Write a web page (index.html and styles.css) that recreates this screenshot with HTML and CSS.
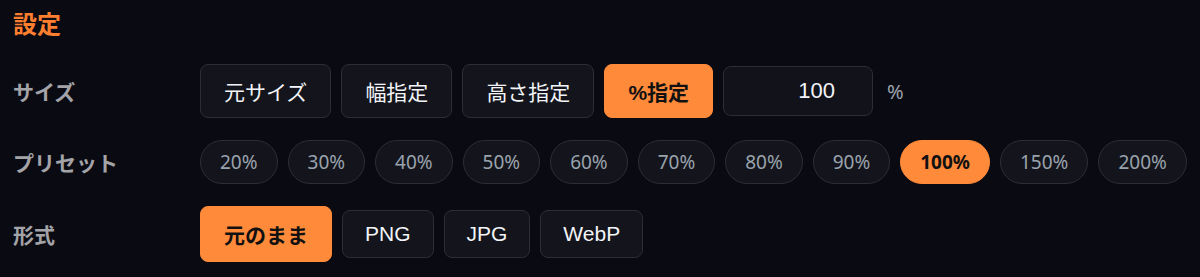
FILE: index.html
```html
<!DOCTYPE html>
<html lang="ja">
<head>
<meta charset="utf-8">
<link rel="stylesheet" href="styles.css">
</head>
<body>
<div class="panel">
  <h2 class="title">設定</h2>
  <div class="row">
    <div class="label">サイズ</div>
    <div class="controls">
      <button class="btn">元サイズ</button>
      <button class="btn">幅指定</button>
      <button class="btn">高さ指定</button>
      <button class="btn active">%指定</button>
      <div class="input">100</div>
      <span class="unit">%</span>
    </div>
  </div>
  <div class="row">
    <div class="label">プリセット</div>
    <div class="controls pills">
      <button class="pill">20%</button>
      <button class="pill">30%</button>
      <button class="pill">40%</button>
      <button class="pill">50%</button>
      <button class="pill">60%</button>
      <button class="pill">70%</button>
      <button class="pill">80%</button>
      <button class="pill">90%</button>
      <button class="pill active">100%</button>
      <button class="pill">150%</button>
      <button class="pill">200%</button>
    </div>
  </div>
  <div class="row">
    <div class="label">形式</div>
    <div class="controls">
      <button class="btn fmt active big">元のまま</button>
      <button class="btn fmt">PNG</button>
      <button class="btn fmt">JPG</button>
      <button class="btn fmt">WebP</button>
    </div>
  </div>
</div>
</body>
</html>
```
FILE: styles.css
```css
html, body {
  margin: 0;
  padding: 0;
  background: #0a0a12;
}
body {
  font-family: "Liberation Sans", "Noto Sans CJK JP", sans-serif;
  color: #f2f4f8;
}
.panel {
  padding: 10px 13px 0 13px;
  display: flex;
  flex-direction: column;
  gap: 22px;
}
.title {
  margin: 0;
  font-size: 24px;
  line-height: 30px;
  font-weight: 700;
  color: #ff7f30;
  margin-bottom: 2px;
}
.row {
  display: flex;
  align-items: center;
}
.label {
  width: 187px;
  flex: none;
  font-size: 21px;
  font-weight: 700;
  color: #a3a3a8;
}
.controls {
  display: flex;
  align-items: center;
  gap: 10px;
}
button {
  font-family: inherit;
  margin: 0;
}
.btn {
  box-sizing: border-box;
  height: 54px;
  padding: 0 23px;
  background: #14151c;
  border: 1px solid #2c2d35;
  border-radius: 8px;
  color: #f2f4f8;
  font-size: 21px;
}
.btn.active {
  background: #ff8a3a;
  border-color: #ff8a3a;
  color: #111;
  font-weight: 700;
}
.btn.fmt {
  height: 48px;
  padding: 0 22px;
  font-size: 21px;
}
.btn.fmt.big {
  height: 56px;
  padding: 0 23px;
}
.input {
  box-sizing: border-box;
  width: 150px;
  height: 50px;
  padding-right: 37px;
  background: #12131a;
  border: 1px solid #2c2d35;
  border-radius: 8px;
  font-size: 22px;
  color: #f2f4f8;
  display: flex;
  align-items: center;
  justify-content: flex-end;
}
.unit {
  margin-left: 4px;
  font-size: 20px;
  color: #9aa3ad;
  font-family: "Noto Sans", sans-serif;
}
.pills {
  gap: 10px;
}
.pill {
  box-sizing: border-box;
  height: 44px;
  padding: 0 19px;
  background: #14151c;
  border: 1px solid #2c2d35;
  border-radius: 22px;
  color: #9aa3ad;
  font-family: "Noto Sans", sans-serif;
  font-size: 19px;
  min-width: 77px;
}
.pill.active {
  background: #ff8a3a;
  border-color: #ff8a3a;
  color: #111;
  font-weight: 700;
}
```
